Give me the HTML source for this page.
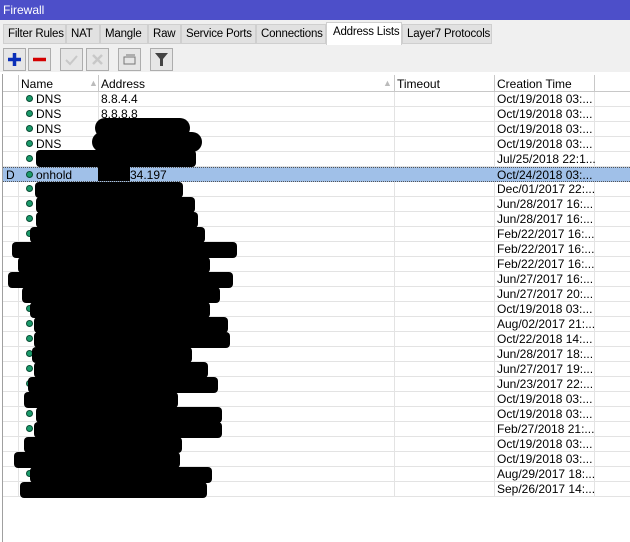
<!DOCTYPE html><html><head><style>
body{margin:0;width:630px;height:542px;background:#fff;font-family:"Liberation Sans",sans-serif;font-size:12px;color:#000;position:relative;overflow:hidden}
.a{position:absolute;white-space:nowrap}
.tab{position:absolute;top:24px;height:20px;background:#e1e1e1;border:1px solid #cfcfcf;box-sizing:border-box;line-height:19px;padding-left:4px;white-space:nowrap;overflow:hidden;font-size:11.5px;letter-spacing:-0.2px}
.btn{position:absolute;top:48px;width:23px;height:23px;border:1px solid #adadad;background:#e6e6e6;box-sizing:border-box}
.row{position:absolute;left:3px;width:627px;height:15px;border-bottom:1px solid #e3e3e3;box-sizing:border-box;line-height:14px}
.row span{position:absolute;white-space:nowrap}
.dot{position:absolute;left:23px;top:3px;width:7px;height:7px;border-radius:50%;background:#1a9a6a;border:1px solid #0b4d35;box-sizing:border-box}
.vl{position:absolute;top:75px;width:1px;height:422px;background:#e3e3e3}
.k{position:absolute;background:#000;border-radius:4px}
</style></head><body>
<div class="a" style="left:0;top:0;width:630px;height:20px;background:#4d4fc9;color:#fff;line-height:20px;padding-left:3px;font-size:12px">Firewall</div>
<div class="a" style="left:0;top:20px;width:630px;height:52px;background:#f0f0f0"></div>
<div class="tab" style="left:3px;width:63px">Filter Rules</div>
<div class="tab" style="left:66px;width:34px">NAT</div>
<div class="tab" style="left:100px;width:48px">Mangle</div>
<div class="tab" style="left:148px;width:33px">Raw</div>
<div class="tab" style="left:181px;width:75px">Service Ports</div>
<div class="tab" style="left:256px;width:70px">Connections</div>
<div class="tab" style="left:326px;top:22px;height:23px;width:76px;background:#fff;border-bottom:none;padding-left:6px">Address Lists</div>
<div class="tab" style="left:402px;width:90px">Layer7 Protocols</div>
<div class="btn" style="left:3px"><svg width="21" height="21"><path d="M10.5 4v13M4 10.5h13" stroke="#0b2fb8" stroke-width="3.5"/></svg></div>
<div class="btn" style="left:28px"><svg width="21" height="21"><path d="M4 10.5h13" stroke="#d40000" stroke-width="3.5"/></svg></div>
<div class="btn" style="left:60px"><svg width="21" height="21"><path d="M5 11l4 4 7-8" stroke="#c8c8c8" stroke-width="2" fill="none"/></svg></div>
<div class="btn" style="left:86px"><svg width="21" height="21"><path d="M6 6l9 9M15 6l-9 9" stroke="#c8c8c8" stroke-width="2.5"/></svg></div>
<div class="btn" style="left:118px"><svg width="21" height="21"><path d="M5 8h11v7H5zM7 6h9" stroke="#777" fill="none"/></svg></div>
<div class="btn" style="left:150px"><svg width="21" height="21"><path d="M4 4h13l-5 6v7h-3v-7z" fill="#444"/></svg></div>
<div class="a" style="left:2px;top:74px;width:1px;height:468px;background:#a0a0a0"></div>
<div class="a" style="left:3px;top:75px;width:627px;height:17px;border-bottom:1px solid #c8c8c8;box-sizing:border-box"></div>
<div class="a" style="left:18px;top:75px;width:1px;height:17px;background:#c8c8c8"></div>
<div class="a" style="left:98px;top:75px;width:1px;height:17px;background:#c8c8c8"></div>
<div class="a" style="left:394px;top:75px;width:1px;height:17px;background:#c8c8c8"></div>
<div class="a" style="left:494px;top:75px;width:1px;height:17px;background:#c8c8c8"></div>
<div class="a" style="left:594px;top:75px;width:1px;height:17px;background:#c8c8c8"></div>
<div class="a" style="left:21px;top:77px">Name</div>
<div class="a" style="left:101px;top:77px">Address</div>
<div class="a" style="left:397px;top:77px">Timeout</div>
<div class="a" style="left:497px;top:77px">Creation Time</div>
<div class="a" style="left:89px;top:78px;color:#bbb;font-size:9px">▲</div>
<div class="a" style="left:383px;top:78px;color:#bbb;font-size:9px">▲</div>
<div class="vl" style="left:18px;top:92px;height:405px"></div>
<div class="vl" style="left:98px;top:92px;height:405px"></div>
<div class="vl" style="left:394px;top:92px;height:405px"></div>
<div class="vl" style="left:494px;top:92px;height:405px"></div>
<div class="vl" style="left:594px;top:92px;height:405px"></div>
<div id="rows"></div>
<script>
var d=["Oct/19/2018 03:...","Oct/19/2018 03:...","Oct/19/2018 03:...","Oct/19/2018 03:...","Jul/25/2018 22:1...","Oct/24/2018 03:...","Dec/01/2017 22:...","Jun/28/2017 16:...","Jun/28/2017 16:...","Feb/22/2017 16:...","Feb/22/2017 16:...","Feb/22/2017 16:...","Jun/27/2017 16:...","Jun/27/2017 20:...","Oct/19/2018 03:...","Aug/02/2017 21:...","Oct/22/2018 14:...","Jun/28/2017 18:...","Jun/27/2017 19:...","Jun/23/2017 22:...","Oct/19/2018 03:...","Oct/19/2018 03:...","Feb/27/2018 21:...","Oct/19/2018 03:...","Oct/19/2018 03:...","Aug/29/2017 18:...","Sep/26/2017 14:..."];
var h="";for(var i=0;i<27;i++){var y=92+15*i;var sel=i==5;
h+='<div class="row" style="top:'+y+'px;'+(sel?'background:#a0c0e8;border-top:1px dotted #555;border-bottom:1px dotted #555;':'')+'"><div class="dot"></div>';
if(i<4)h+='<span style="left:33px">DNS</span>';
if(i==0)h+='<span style="left:98px">8.8.4.4</span>';
if(i==1)h+='<span style="left:98px">8.8.8.8</span>';
if(sel)h+='<span style="left:3px">D</span><span style="left:33px">onhold</span><span style="left:127px">34.197</span>';
h+='<span style="left:494px">'+d[i]+'</span></div>';}
var r=[183,195,198,205,237,210,233,220,210,228,230,192,208,218,178,222,222,182,180,212,207];
var l=[35,36,36,30,12,18,8,22,30,34,34,32,34,28,24,36,34,24,14,30,20];
for(var j=0;j<r.length;j++){var y=182+15*j;h+='<div class="k" style="left:'+l[j]+'px;top:'+y+'px;width:'+(r[j]-l[j])+'px;height:16px"></div>';}
h+='<div class="k" style="left:95px;top:118px;width:95px;height:20px;border-radius:10px"></div>';
h+='<div class="k" style="left:92px;top:132px;width:110px;height:20px;border-radius:10px"></div>';
h+='<div class="k" style="left:36px;top:150px;width:160px;height:17px"></div>';
h+='<div class="k" style="left:98px;top:167px;width:32px;height:14px;border-radius:0"></div>';
document.getElementById("rows").innerHTML=h;
</script>
</body></html>
